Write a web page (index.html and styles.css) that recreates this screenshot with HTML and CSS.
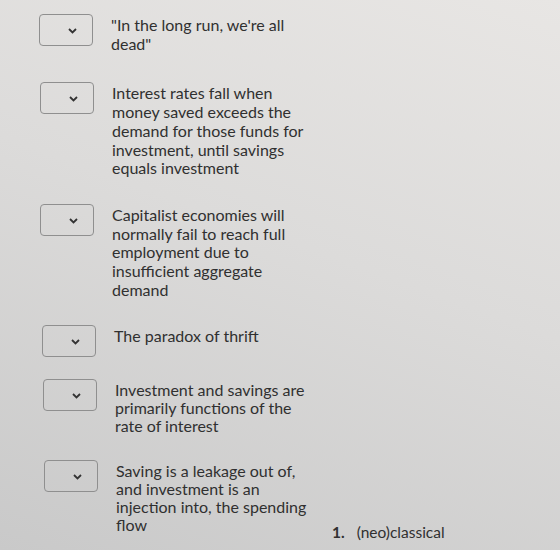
FILE: index.html
```html
<!DOCTYPE html>
<html lang="en">
<head>
    <meta charset="UTF-8">
    <meta name="viewport" content="width=device-width, initial-scale=1.0">
    <title>Matching question</title>
    <link rel="stylesheet" href="styles.css">
</head>
<body>
    <div class="page">
        <div class="questions">
            <div class="row">
                <div class="dropdown">
                    <svg width="9" height="6" viewBox="0 0 9 6"><path d="M1 1 L4.5 4.5 L8 1" fill="none" stroke="#333" stroke-width="1.8"/></svg>
                </div>
                <p class="statement">"In the long run, we're all dead"</p>
            </div>
            <div class="row">
                <div class="dropdown">
                    <svg width="9" height="6" viewBox="0 0 9 6"><path d="M1 1 L4.5 4.5 L8 1" fill="none" stroke="#333" stroke-width="1.8"/></svg>
                </div>
                <p class="statement">Interest rates fall when money saved exceeds the demand for those funds for investment, until savings equals investment</p>
            </div>
            <div class="row">
                <div class="dropdown">
                    <svg width="9" height="6" viewBox="0 0 9 6"><path d="M1 1 L4.5 4.5 L8 1" fill="none" stroke="#333" stroke-width="1.8"/></svg>
                </div>
                <p class="statement">Capitalist economies will normally fail to reach full employment due to insufficient aggregate demand</p>
            </div>
            <div class="row">
                <div class="dropdown">
                    <svg width="9" height="6" viewBox="0 0 9 6"><path d="M1 1 L4.5 4.5 L8 1" fill="none" stroke="#333" stroke-width="1.8"/></svg>
                </div>
                <p class="statement">The paradox of thrift</p>
            </div>
            <div class="row">
                <div class="dropdown">
                    <svg width="9" height="6" viewBox="0 0 9 6"><path d="M1 1 L4.5 4.5 L8 1" fill="none" stroke="#333" stroke-width="1.8"/></svg>
                </div>
                <p class="statement">Investment and savings are primarily functions of the rate of interest</p>
            </div>
            <div class="row">
                <div class="dropdown">
                    <svg width="9" height="6" viewBox="0 0 9 6"><path d="M1 1 L4.5 4.5 L8 1" fill="none" stroke="#333" stroke-width="1.8"/></svg>
                </div>
                <p class="statement">Saving is a leakage out of, and investment is an injection into, the spending flow</p>
            </div>
        </div>

        <ol class="answers">
            <li><span class="num">1.</span> (neo)classical</li>
        </ol>
    </div>
</body>
</html>
```

FILE: styles.css
```css
body {
    margin: 0;
    font-family: Lato, "Open Sans", sans-serif;
    color: #303030;
    background: linear-gradient(200deg, #e8e6e4 0%, #dcdbda 45%, #c9c9c9 100%);
    min-height: 550px;
}

.page {
    display: flex;
    padding: 14px 0 0 39px;
}

.questions {
    display: flex;
    flex-direction: column;
    gap: 26px;
}

.row {
    display: flex;
    align-items: flex-start;
    gap: 18px;
}

.row:nth-child(1) { margin-bottom: 3px; }
.row:nth-child(2), .row:nth-child(3) { margin-left: 1px; }
.row:nth-child(4) { margin-left: 3px; margin-bottom: -4px; }
.row:nth-child(5) { margin-left: 4px; margin-bottom: -1px; }
.row:nth-child(6) { margin-left: 5px; }

.dropdown {
    width: 54px;
    height: 32px;
    box-sizing: border-box;
    border: 1px solid #8f8f8f;
    border-radius: 4px;
    display: flex;
    align-items: center;
    justify-content: flex-end;
    padding-right: 15px;
}

.dropdown svg {
    margin-top: 2px;
}

.statement {
    margin: 0;
    width: 196px;
    font-size: 16px;
    line-height: 18.7px;
    padding-top: 2px;
}

.row:nth-child(5) .statement,
.row:nth-child(6) .statement {
    line-height: 18px;
}

.answers {
    list-style: none;
    margin: 0 0 0 20px;
    padding: 0;
    align-self: flex-end;
    font-size: 15.5px;
    line-height: 19px;
    position: relative;
    top: 8px;
}

.num {
    font-weight: bold;
    margin-right: 8px;
}
```
